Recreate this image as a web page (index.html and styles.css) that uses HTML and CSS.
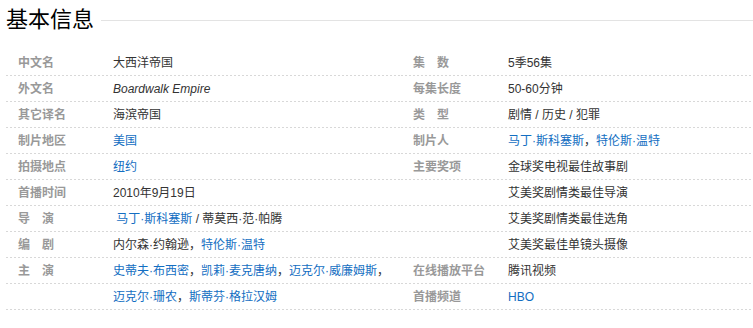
FILE: index.html
```html
<!DOCTYPE html>
<html lang="zh-CN">
<head>
<meta charset="utf-8">
<title>基本信息</title>
<link rel="stylesheet" href="styles.css">
</head>
<body>
<div class="page">
  <div class="head">
    <h2 class="title">基本信息</h2>
    <div class="rule"></div>
  </div>
  <div class="info">
    <div class="col col-left">
      <div class="row"><div class="label">中文名</div><div class="value">大西洋帝国</div></div>
      <div class="row"><div class="label">外文名</div><div class="value"><i>Boardwalk Empire</i></div></div>
      <div class="row"><div class="label">其它译名</div><div class="value">海滨帝国</div></div>
      <div class="row"><div class="label">制片地区</div><div class="value"><a href="#">美国</a></div></div>
      <div class="row"><div class="label">拍摄地点</div><div class="value"><a href="#">纽约</a></div></div>
      <div class="row"><div class="label">首播时间</div><div class="value">2010年9月19日</div></div>
      <div class="row"><div class="label">导　演</div><div class="value">&nbsp;<a href="#">马丁·斯科塞斯</a> / 蒂莫西·范·帕腾</div></div>
      <div class="row"><div class="label">编　剧</div><div class="value">内尔森·约翰逊，<a href="#">特伦斯·温特</a></div></div>
      <div class="row"><div class="label">主　演</div><div class="value"><a href="#">史蒂夫·布西密</a>，<a href="#">凯莉·麦克唐纳</a>，<a href="#">迈克尔·威廉姆斯</a>，</div></div>
      <div class="row"><div class="label"></div><div class="value"><a href="#">迈克尔·珊农</a>，<a href="#">斯蒂芬·格拉汉姆</a></div></div>
    </div>
    <div class="col col-right">
      <div class="row"><div class="label">集　数</div><div class="value">5季56集</div></div>
      <div class="row"><div class="label">每集长度</div><div class="value">50-60分钟</div></div>
      <div class="row"><div class="label">类　型</div><div class="value">剧情 / 历史 / 犯罪</div></div>
      <div class="row"><div class="label">制片人</div><div class="value"><a href="#">马丁·斯科塞斯</a>，<a href="#">特伦斯·温特</a></div></div>
      <div class="row"><div class="label">主要奖项</div><div class="value">金球奖电视最佳故事剧</div></div>
      <div class="row"><div class="label"></div><div class="value">艾美奖剧情类最佳导演</div></div>
      <div class="row"><div class="label"></div><div class="value">艾美奖剧情类最佳选角</div></div>
      <div class="row"><div class="label"></div><div class="value">艾美奖最佳单镜头摄像</div></div>
      <div class="row"><div class="label">在线播放平台</div><div class="value">腾讯视频</div></div>
      <div class="row"><div class="label">首播频道</div><div class="value"><a href="#">HBO</a></div></div>
    </div>
  </div>
</div>
</body>
</html>
```
FILE: styles.css
```css
html, body {
  margin: 0;
  padding: 0;
  background: #fff;
}
body {
  font-family: "Liberation Sans", "Noto Sans CJK SC", sans-serif;
  font-size: 12px;
  color: #333;
}
.page {
  width: 753px;
}
.head {
  display: flex;
  align-items: center;
  padding: 8px 0 0 6px;
  height: 24px;
  margin-bottom: 18px;
}
.title {
  margin: 0;
  font-size: 22px;
  line-height: 24px;
  font-weight: normal;
  color: #000;
  flex: none;
}
.rule {
  flex: 1;
  height: 1px;
  margin-left: 7px;
  background: #e3e3e3;
}
.info {
  display: grid;
  grid-template-columns: 395px 351px;
  margin-left: 6px;
}
.col {
  display: flex;
  flex-direction: column;
}
.row {
  display: flex;
  height: 26px;
  line-height: 26px;
  background-image: linear-gradient(to right, #d8d8d8 2px, transparent 2px);
  background-size: 4px 1px;
  background-repeat: repeat-x;
  background-position: left bottom;
}
.label {
  flex: none;
  width: 95px;
  padding-left: 12px;
  font-weight: bold;
  color: #999;
  white-space: nowrap;
}
.value {
  white-space: nowrap;
  color: #333;
}
.value a {
  color: #136ec2;
  text-decoration: none;
}
.value i {
  color: #333;
}
```
